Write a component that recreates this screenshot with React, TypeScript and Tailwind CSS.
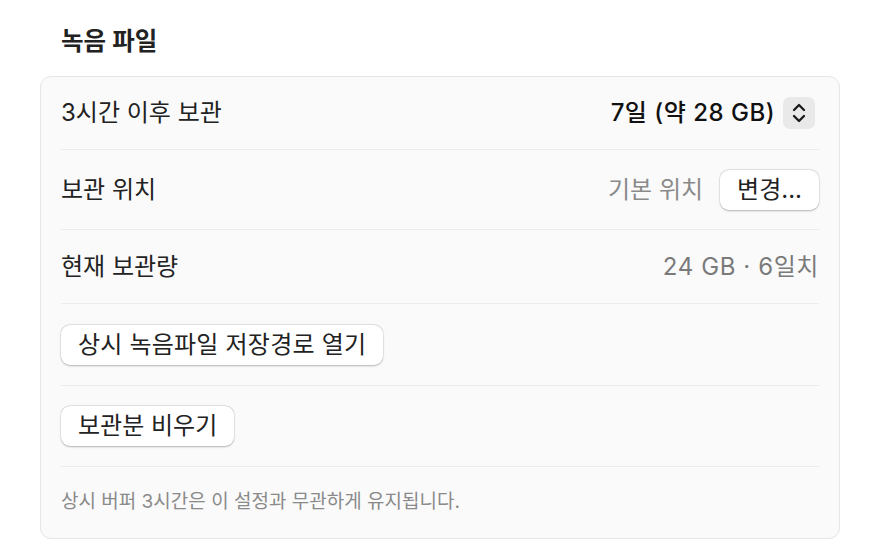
import React from "react";

const font = { fontFamily: '"Inter", "Noto Sans CJK KR", sans-serif' };

function Stepper() {
  return (
    <div className="w-[32px] h-[32px] rounded-[7px] bg-[#e9e9e9] flex items-center justify-center">
      <svg width="16" height="24" viewBox="0 0 16 24" fill="none" stroke="#1a1a1a" strokeWidth="2.3" strokeLinecap="round" strokeLinejoin="round">
        <path d="M3 9 L8 4 L13 9" />
        <path d="M3 15 L8 20 L13 15" />
      </svg>
    </div>
  );
}

function Btn({ children }: { children: React.ReactNode }) {
  return (
    <button className="h-[40px] px-[17px] rounded-[9px] bg-white text-[24px] leading-none text-[#222] shadow-[0_0.5px_2px_rgba(0,0,0,0.25),0_0_0_0.5px_rgba(0,0,0,0.08)] flex items-center">
      {children}
    </button>
  );
}

export default function App() {
  return (
    <div className="w-[880px] h-[540px] bg-white overflow-hidden" style={font}>
      <div className="pl-[61px] pt-[25px] h-[76px]">
        <div className="text-[24.5px] font-semibold text-[#222] leading-[32px]">녹음 파일</div>
      </div>
      <div className="mx-[40px] w-[800px] h-[463px] rounded-[11px] border border-[#e6e6e6] bg-[#fafafa] px-[20px]">
        <div className="flex flex-col">
          <div className="h-[73px] flex items-center justify-between border-b border-[#ebebeb]">
            <span className="text-[24px] text-[#222]">3시간 이후 보관</span>
            <div className="flex items-center gap-[8px] mr-[4px]">
              <span className="text-[24px] font-medium text-[#111] tracking-[0.5px]">7일 (약 28 GB)</span>
              <Stepper />
            </div>
          </div>
          <div className="h-[80px] flex items-center justify-between border-b border-[#ebebeb]">
            <span className="text-[24px] text-[#222]">보관 위치</span>
            <div className="flex items-center gap-[17px]">
              <span className="text-[24px] text-[#8a8a8a]">기본 위치</span>
              <Btn>변경...</Btn>
            </div>
          </div>
          <div className="h-[74px] flex items-center justify-between border-b border-[#ebebeb]">
            <span className="text-[24px] text-[#222]">현재 보관량</span>
            <span className="text-[24px] text-[#7a7a7a] tracking-[0.6px]">24 GB · 6일치</span>
          </div>
          <div className="h-[82px] flex items-center border-b border-[#ebebeb]">
            <Btn><span className="tracking-[0.2px]">상시 녹음파일 저장경로 열기</span></Btn>
          </div>
          <div className="h-[81px] flex items-center border-b border-[#ebebeb]">
            <Btn>보관분 비우기</Btn>
          </div>
          <div className="h-[71px] flex items-center">
            <span className="text-[19px] text-[#8a8a8a]">상시 버퍼 3시간은 이 설정과 무관하게 유지됩니다.</span>
          </div>
        </div>
      </div>
    </div>
  );
}
